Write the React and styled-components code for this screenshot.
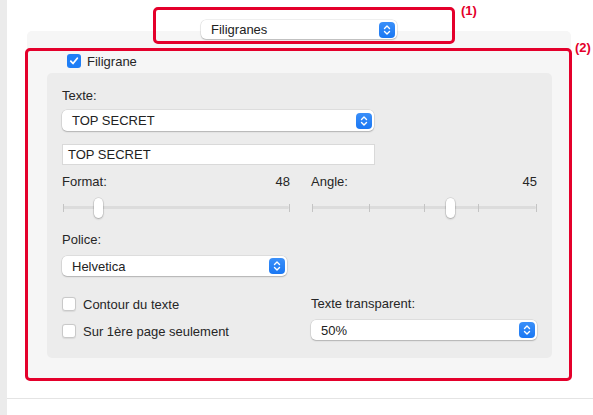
import React from 'react';
import styled, { createGlobalStyle } from 'styled-components';

const GlobalStyle = createGlobalStyle`
  html, body {
    margin: 0;
    padding: 0;
    background: #ffffff;
  }
  body {
    font-family: "Liberation Sans", Helvetica, Arial, sans-serif;
    font-size: 13px;
    color: #262626;
  }
`;

const Screen = styled.div`
  position: relative;
  display: flex;
  width: 593px;
  height: 415px;
  background: #ffffff;
  overflow: hidden;
`;

const Rail = styled.div`
  flex: none;
  width: 7px;
  background: #ebebeb;
`;

const Main = styled.div`
  flex: 1;
  display: flex;
  flex-direction: column;
`;

const Stage = styled.div`
  flex: none;
  height: 378px;
  padding: 20px 0 0 20px;
  border-bottom: 1px solid #e4e4e4;
`;

const HeaderRow = styled.div`
  position: relative;
  z-index: 1;
  display: flex;
  justify-content: center;
  width: 544px;
  height: 19px;
  margin-bottom: -8px;
`;

const Panel = styled.div`
  width: 544px;
  height: 328px;
  padding-top: 22px;
  background: #f6f6f6;
  border-radius: 5px;
`;

const TopCheck = styled.div`
  margin: 0 0 4px 40px;
`;

const Group = styled.div`
  margin: 0 19px 0 20px;
  height: 270px;
  padding: 15px 15px 0;
  background: #ececec;
  border-radius: 5px;
`;

const Label = styled.div`
  height: 16px;
  line-height: 16px;
  margin-top: ${(p) => p.$top || 0}px;
  color: #262626;
`;

const ValueRow = styled.div`
  display: flex;
  justify-content: space-between;
  height: 16px;
  line-height: 16px;
`;

const Columns = styled.div`
  display: grid;
  grid-template-columns: 228px 1fr;
  column-gap: 21px;
  margin-top: ${(p) => p.$top || 0}px;
`;

const Column = styled.div`
  display: flex;
  flex-direction: column;
`;

const PopupButton = styled.div`
  display: flex;
  align-items: center;
  justify-content: space-between;
  box-sizing: border-box;
  width: ${(p) => p.$width}px;
  height: ${(p) => p.$height || 21}px;
  margin-top: ${(p) => p.$top || 0}px;
  padding: 0 2px 0 10px;
  background: #ffffff;
  border-radius: 5px;
  box-shadow: 0 0 0 0.5px rgba(0, 0, 0, 0.12), 0 1px 1.5px rgba(0, 0, 0, 0.2);
  color: #222222;
`;

const Stepper = styled.span`
  display: flex;
  align-items: center;
  justify-content: center;
  width: 16px;
  height: 16px;
  border-radius: 4px;
  background: linear-gradient(#3a8ff9, #1a77f3);
`;

const TextField = styled.div`
  box-sizing: border-box;
  width: 313px;
  height: 21px;
  margin-top: 13px;
  padding-left: 5px;
  line-height: 19px;
  background: #ffffff;
  border: 1px solid #d9d9d9;
  color: #1e1e1e;
`;

const CheckRow = styled.label`
  display: flex;
  align-items: center;
  gap: ${(p) => p.$gap || 7}px;
  height: 16px;
  margin-top: ${(p) => p.$top || 0}px;
  color: #262626;
`;

const Box = styled.span`
  display: flex;
  align-items: center;
  justify-content: center;
  box-sizing: border-box;
  width: 14px;
  height: 14px;
  border-radius: 3px;
  background: ${(p) => (p.$on ? '#1f7ef6' : '#ffffff')};
  border: ${(p) => (p.$on ? 'none' : '1px solid #c9c9c9')};
  box-shadow: ${(p) => (p.$on ? 'none' : '0 0.5px 1px rgba(0,0,0,0.08)')};
`;

const SliderTrack = styled.div`
  position: relative;
  height: 20px;
  margin: 8px 1px 0 1px;

  &::before {
    content: '';
    position: absolute;
    left: 0;
    right: 0;
    top: 8px;
    height: 3px;
    background: #dcdcdc;
    border-radius: 2px;
  }
`;

const Tick = styled.span`
  position: absolute;
  top: 6px;
  width: 1px;
  height: 8px;
  margin-left: -0.5px;
  background: #c4c4c4;
`;

const Thumb = styled.span`
  position: absolute;
  top: 0;
  width: 9px;
  height: 20px;
  margin-left: -4.5px;
  background: #ffffff;
  border-radius: 5px;
  box-shadow: 0 0 0 0.5px rgba(0, 0, 0, 0.15), 0 1px 2px rgba(0, 0, 0, 0.25);
`;

const Callout = styled.div`
  position: absolute;
  left: ${(p) => p.$x}px;
  top: ${(p) => p.$y}px;
  width: ${(p) => p.$w}px;
  height: ${(p) => p.$h}px;
  box-sizing: border-box;
  border: 3px solid #e4002b;
  border-radius: 5px;
  pointer-events: none;
`;

const CalloutTag = styled.div`
  position: absolute;
  left: ${(p) => p.$x}px;
  top: ${(p) => p.$y}px;
  font-weight: bold;
  font-size: 13px;
  color: #e4002b;
`;

function Chevrons() {
  return (
    <svg width="8" height="12" viewBox="0 0 8 12">
      <path
        d="M1.5 4.5 L4 2 L6.5 4.5 M1.5 7.5 L4 10 L6.5 7.5"
        fill="none"
        stroke="#ffffff"
        strokeWidth="1.4"
        strokeLinecap="round"
        strokeLinejoin="round"
      />
    </svg>
  );
}

function Popup({ value, width, height, top }) {
  return (
    <PopupButton $width={width} $height={height} $top={top}>
      <span>{value}</span>
      <Stepper>
        <Chevrons />
      </Stepper>
    </PopupButton>
  );
}

function Checkbox({ checked, label, top, gap }) {
  return (
    <CheckRow $top={top} $gap={gap}>
      <Box $on={checked}>
        {checked && (
          <svg width="10" height="10" viewBox="0 0 10 10">
            <path
              d="M1.8 5.2 L4 7.5 L8.3 2.3"
              fill="none"
              stroke="#ffffff"
              strokeWidth="1.8"
              strokeLinecap="round"
              strokeLinejoin="round"
            />
          </svg>
        )}
      </Box>
      <span>{label}</span>
    </CheckRow>
  );
}

function Slider({ value, ticks }) {
  return (
    <SliderTrack>
      {ticks.map((t) => (
        <Tick key={t} style={{ left: `${t * 100}%` }} />
      ))}
      <Thumb style={{ left: `${value * 100}%` }} />
    </SliderTrack>
  );
}

export default function App() {
  return (
    <>
      <GlobalStyle />
      <Screen>
        <Rail />
        <Main>
          <Stage>
            <HeaderRow>
              <Popup value="Filigranes" width={196} height={19} />
            </HeaderRow>
            <Panel>
              <TopCheck>
                <Checkbox checked label="Filigrane" gap={6} />
              </TopCheck>
              <Group>
                <Label>Texte:</Label>
                <Popup value="TOP SECRET" width={312} top={6} />
                <TextField>TOP SECRET</TextField>

                <Columns $top={9}>
                  <Column>
                    <ValueRow>
                      <span>Format:</span>
                      <span>48</span>
                    </ValueRow>
                    <Slider value={0.157} ticks={[0, 1]} />
                    <Label $top={14}>Police:</Label>
                    <Popup value="Helvetica" width={225} height={20} top={8} />
                  </Column>
                  <Column>
                    <ValueRow>
                      <span>Angle:</span>
                      <span>45</span>
                    </ValueRow>
                    <Slider value={0.62} ticks={[0, 0.257, 0.502, 0.743, 1]} />
                  </Column>
                </Columns>

                <Columns $top={20}>
                  <Column>
                    <Checkbox label="Contour du texte" />
                    <Checkbox label="Sur 1ère page seulement" top={11} />
                  </Column>
                  <Column>
                    <Label>Texte transparent:</Label>
                    <Popup value="50%" width={226} height={20} top={8} />
                  </Column>
                </Columns>
              </Group>
            </Panel>
          </Stage>
        </Main>

        <Callout $x={153} $y={7} $w={302} $h={37} />
        <CalloutTag $x={461} $y={3}>(1)</CalloutTag>
        <Callout $x={25} $y={48} $w={547} $h={333} />
        <CalloutTag $x={575} $y={40}>(2)</CalloutTag>
      </Screen>
    </>
  );
}
